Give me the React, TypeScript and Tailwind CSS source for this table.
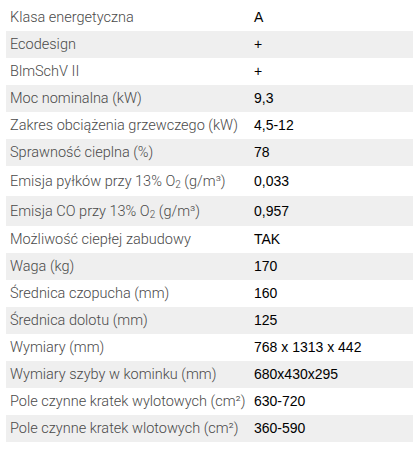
import React from 'react';

type Row = { label: React.ReactNode; value: string; tall?: boolean };

const O2 = (
  <>
    O<sub className="text-[10px]">2</sub>
  </>
);

const rows: Row[] = [
  { label: 'Klasa energetyczna', value: 'A' },
  { label: 'Ecodesign', value: '+' },
  { label: 'BlmSchV II', value: '+' },
  { label: 'Moc nominalna (kW)', value: '9,3' },
  { label: 'Zakres obciążenia grzewczego (kW)', value: '4,5-12' },
  { label: 'Sprawność cieplna (%)', value: '78' },
  { label: <>Emisja pyłków przy 13% {O2} (g/m³)</>, value: '0,033', tall: true },
  { label: <>Emisja CO przy 13% {O2} (g/m³)</>, value: '0,957', tall: true },
  { label: 'Możliwość ciepłej zabudowy', value: 'TAK' },
  { label: 'Waga (kg)', value: '170' },
  { label: 'Średnica czopucha (mm)', value: '160' },
  { label: 'Średnica dolotu (mm)', value: '125' },
  { label: 'Wymiary (mm)', value: '768 x 1313 x 442' },
  { label: 'Wymiary szyby w kominku (mm)', value: '680x430x295' },
  { label: 'Pole czynne kratek wylotowych (cm²)', value: '630-720' },
  { label: 'Pole czynne kratek wlotowych (cm²)', value: '360-590' },
];

export default function App() {
  return (
    <div className="w-[414px] h-[450px] bg-white pt-1 pl-1.5">
      <table className="w-[407px] border-collapse text-sm">
        <tbody>
          {rows.map((row, i) => (
            <tr
              key={i}
              className={(i % 2 === 1 ? 'bg-[#efefef] ' : '') + (row.tall ? 'h-[30px]' : 'h-[27px]')}>
              <td className="w-[244px] pl-1 py-0 text-[14.5px] leading-[19px] text-[#4a4a4a] font-light font-['Roboto',sans-serif] whitespace-nowrap">
                {row.label}
              </td>
              <td className="pl-1 py-0 leading-[19px] text-black font-['Liberation_Sans',Arial,sans-serif]">
                {row.value}
              </td>
            </tr>
          ))}
        </tbody>
      </table>
    </div>
  );
}
